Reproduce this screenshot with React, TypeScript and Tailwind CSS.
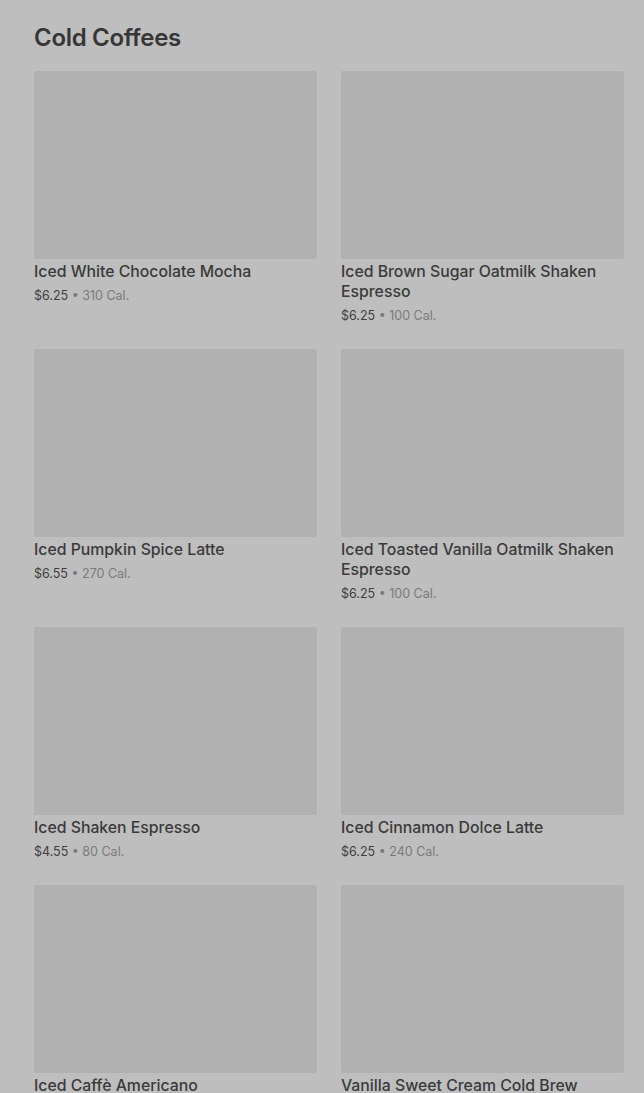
const items = [
  { name: 'Iced White Chocolate Mocha', price: '$6.25', cal: '310 Cal.' },
  { name: 'Iced Brown Sugar Oatmilk Shaken Espresso', price: '$6.25', cal: '100 Cal.' },
  { name: 'Iced Pumpkin Spice Latte', price: '$6.55', cal: '270 Cal.' },
  { name: 'Iced Toasted Vanilla Oatmilk Shaken Espresso', price: '$6.25', cal: '100 Cal.' },
  { name: 'Iced Shaken Espresso', price: '$4.55', cal: '80 Cal.' },
  { name: 'Iced Cinnamon Dolce Latte', price: '$6.25', cal: '240 Cal.' },
  { name: 'Iced Caffè Americano', price: '$3.95', cal: '15 Cal.' },
  { name: 'Vanilla Sweet Cream Cold Brew', price: '$5.45', cal: '110 Cal.' },
];

export default function App() {
  return (
    <div className="h-[1093px] overflow-hidden bg-[#bebebe] pl-[34px] pr-[20px] pt-[24px] font-['Inter',sans-serif]">
      <h2 className="text-[24px] font-semibold leading-[28px] tracking-[-0.3px] text-[#363636]">Cold Coffees</h2>
      <div className="mt-[19px] grid grid-cols-2 gap-x-[24px] gap-y-[24px]">
        {items.map((item) => (
          <article key={item.name}>
            <div className="h-[188px] rounded-[2px] bg-[#b1b1b1]" />
            <h3 className="mt-[3px] text-[15.8px] leading-[20px] font-medium text-[#3a3a3a]">{item.name}</h3>
            <p className="mt-[4px] text-[12.5px] leading-[19px] text-[#3e3e3e]">
              {item.price}
              <span className="text-[#7a7a7a]"> • {item.cal}</span>
            </p>
          </article>
        ))}
      </div>
    </div>
  );
}
